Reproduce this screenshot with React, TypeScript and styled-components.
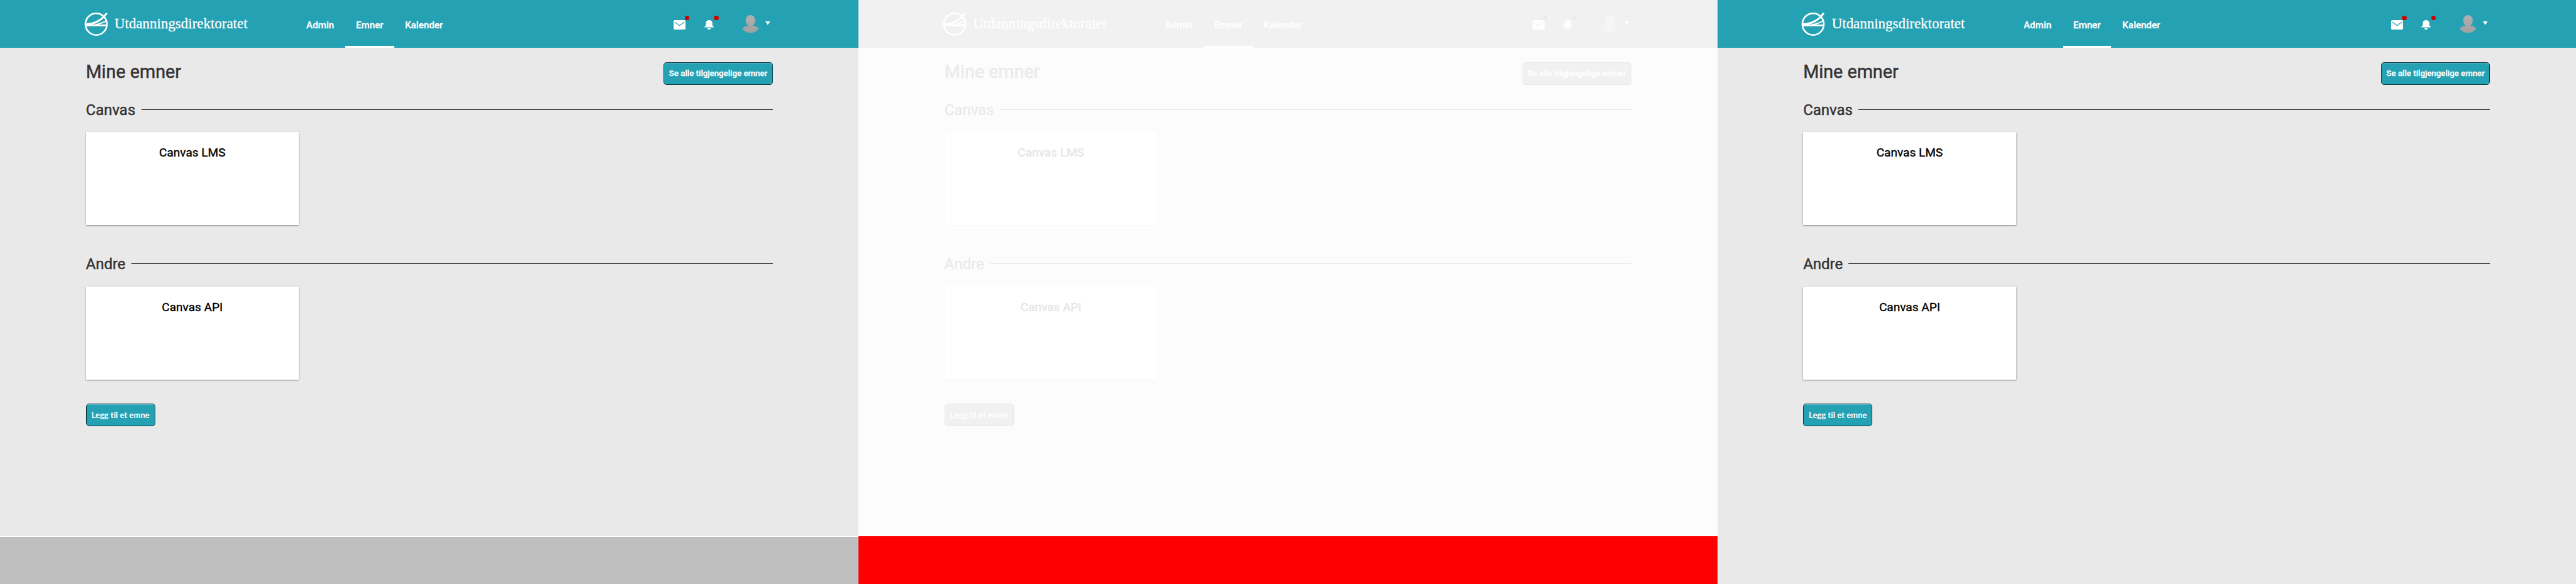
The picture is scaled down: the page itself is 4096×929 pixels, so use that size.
import React from 'react';
import styled, { createGlobalStyle, ThemeProvider } from 'styled-components';

const SCALE = 4096 / 4320;

const vivid = {
  page: '#e9e9e9', header: '#25a1b4', heading: '#333333', rule: '#000000', cardText: '#000000',
  buttonBorder: '#0d3b44', badge: '#cc0000', avatarTop: '#b0b0b0', avatarBottom: '#a0a0a0',
  shadow: '0 1px 3px rgba(0,0,0,.24), 0 1px 2px rgba(0,0,0,.3)', inset: 'rgba(255,255,255,.25)',
};
const faded = {
  page: '#fcfcfc', header: '#f1f1f1', heading: '#ebebeb', rule: '#e5e5e5', cardText: '#e5e5e5',
  buttonBorder: '#e8e8e8', badge: '#ebebeb', avatarTop: '#f6f6f6', avatarBottom: '#f5f5f5',
  shadow: '0 1px 2px rgba(0,0,0,.03)', inset: 'transparent',
};
type Palette = typeof vivid;

declare module 'styled-components' {
  export interface DefaultTheme extends Palette {}
}

const Global = createGlobalStyle`
  html, body { margin: 0; background: #fff; overflow: hidden; }
`;

const Board = styled.main`
  zoom: ${SCALE};
  display: flex;
  width: 4320px;
  height: 980px;
  font-family: Roboto, sans-serif;
`;

const Screen = styled.section`
  width: 1440px;
  height: 980px;
  display: flex;
  flex-direction: column;
  background: ${p => p.theme.page};
`;

const Header = styled.header`
  height: 80px;
  flex: none;
  box-sizing: border-box;
  padding: 0 144px 0 141px;
  display: flex;
  background: ${p => p.theme.header};
  color: #fff;
`;

const Brand = styled.a`
  display: flex;
  align-items: center;
  width: 354px;
  svg { flex: none; }
`;

const BrandName = styled.span`
  margin: 0 0 0 11px;
  font: 24.2px/30px 'Liberation Serif', serif;
  -webkit-text-stroke: 0.3px currentColor;
  white-space: nowrap;
`;

const Nav = styled.nav`
  display: flex;
`;

const NavItem = styled.a<{ $active?: boolean; $width: number }>`
  box-sizing: border-box;
  width: ${p => p.$width}px;
  height: 80px;
  padding-top: 5px;
  display: flex;
  align-items: center;
  justify-content: center;
  font-size: 16px;
  font-weight: 500;
  -webkit-text-stroke: 0.3px currentColor;
  border-top: 4px solid transparent;
  border-bottom: 4px solid ${p => (p.$active ? '#fff' : 'transparent')};
  white-space: nowrap;
`;

const Tools = styled.div`
  margin-left: auto;
  display: flex;
  align-items: flex-start;
`;

const Tool = styled.span<{ $left: number; $top: number }>`
  position: relative;
  display: flex;
  margin: ${p => p.$top}px 0 0 ${p => p.$left}px;
`;

const Badge = styled.i<{ $right: number }>`
  position: absolute;
  top: -8px;
  right: ${p => p.$right}px;
  width: 8px;
  height: 8px;
  border-radius: 50%;
  background: ${p => p.theme.badge};
`;

const Content = styled.div`
  flex: 1;
  padding: 24px 144px 0;
`;

const TitleRow = styled.div`
  height: 38px;
  display: flex;
  justify-content: space-between;
  align-items: center;
`;

const Title = styled.h1`
  margin: 0 0 6px;
  font-size: 30.3px;
  line-height: 38px;
  font-weight: 400;
  -webkit-text-stroke: 0.5px currentColor;
  color: ${p => p.theme.heading};
`;

const Button = styled.button<{ $width: number; $lato?: boolean }>`
  box-sizing: border-box;
  width: ${p => p.$width}px;
  height: 38px;
  padding: 0;
  border: 1px solid ${p => p.theme.buttonBorder};
  border-radius: 5px;
  background: ${p => p.theme.header};
  box-shadow: inset 0 1px 0 ${p => p.theme.inset};
  color: #fff;
  font: ${p => (p.$lato ? '700 13.8px/36px Lato' : '500 14px/36px Roboto')}, sans-serif;
  -webkit-text-stroke: ${p => (p.$lato ? 0 : 0.3)}px currentColor;
  white-space: nowrap;
`;

const Group = styled.section`
  height: 221px;
  padding-top: 24px;
  margin-bottom: 14px;
`;

const Actions = styled.div`
  display: flex;
  padding-top: 17px;
`;

const GroupHeading = styled.div`
  display: flex;
  align-items: center;
  height: 36px;
`;

const GroupName = styled.h2<{ $width: number }>`
  margin: 0;
  padding-top: 1px;
  width: ${p => p.$width}px;
  font-size: 25.3px;
  line-height: 36px;
  font-weight: 400;
  -webkit-text-stroke: 0.5px currentColor;
  color: ${p => p.theme.heading};
`;

const Rule = styled.div`
  flex: 1;
  border-top: 1px solid ${p => p.theme.rule};
`;

const Card = styled.article`
  box-sizing: border-box;
  width: 357px;
  height: 156px;
  margin-top: 20px;
  padding-top: 23px;
  background: #fff;
  box-shadow: ${p => p.theme.shadow};
  text-align: center;
  font-size: 20.1px;
  line-height: 24px;
  -webkit-text-stroke: 0.4px currentColor;
  color: ${p => p.theme.cardText};
`;

const Footer = styled.footer<{ $color: string; $line: string }>`
  box-sizing: border-box;
  height: 80px;
  flex: none;
  border-top: 1px solid ${p => p.$line};
  background: ${p => p.$color};
`;

function LogoMark() {
  return (
    <svg width="40" height="40" viewBox="0 0 40 40" fill="#fff">
      <ellipse cx="20" cy="20.500" rx="18" ry="18.200" fill="none" stroke="#fff" strokeWidth="2.700" />
      <path d="M2 21.200H38V24H2Z" />
      <path d="M2 19.300C17 18.300 28 13 36.300 1L39 2.600C33 12 24 18.500 12 21.400H2Z" />
      <path d="M12 21.600C22 20 31 17.500 37 13.700V16C32 18.800 27 20.500 21 21.600Z" />
    </svg>
  );
}

function Screenshot({ palette, footer, line }: { palette: Palette; footer?: string; line?: string }) {
  const id = palette === vivid ? 'avatar-vivid' : 'avatar-faded';
  return (
    <ThemeProvider theme={palette}>
      <Screen>
        <Header>
          <Brand><LogoMark /><BrandName>Utdanningsdirektoratet</BrandName></Brand>
          <Nav>
            <NavItem $width={84}>Admin</NavItem>
            <NavItem $width={82} $active>Emner</NavItem>
            <NavItem $width={100}>Kalender</NavItem>
          </Nav>
          <Tools>
            <Tool $left={0} $top={34}>
              <svg width="20" height="16" viewBox="0 0 20 16">
                <rect width="20" height="16" rx="2" fill="#fff" />
                <path d="M2 3.200L10 9.200L18 3.200" fill="none" stroke={palette.header} strokeWidth="1.200" />
              </svg>
              <Badge $right={-6} />
            </Tool>
            <Tool $left={31} $top={34}>
              <svg width="16" height="16" viewBox="0 0 16 16" fill="#fff">
                <path d="M8 0C4.500 0 2.500 2.500 2.500 5.500V8.500C2.500 10.200 0 10.500 0 12.200H16C16 10.500 13.500 10.200 13.500 8.500V5.500C13.500 2.500 11.500 0 8 0Z" />
                <path d="M5 13.500H11C10.500 15.200 9.500 16 8 16S5.500 15.200 5 13.500Z" />
              </svg>
              <Badge $right={-8} />
            </Tool>
            <Tool $left={48} $top={25}>
              <svg width="28" height="30" viewBox="0 0 28 30">
                <defs>
                  <linearGradient id={id} x1="0" y1="0" x2="0" y2="1">
                    <stop stopColor={palette.avatarTop} />
                    <stop offset="1" stopColor={palette.avatarBottom} />
                  </linearGradient>
                </defs>
                <path fill={`url(#${id})`} d="M14 0C9.300 0 6 4 6 9.200C6 13 8 16.500 10.500 18C6 18.200 2.500 19.500 .3 22.500C3.500 27.500 8.500 30 14 30S24.500 27.500 27.700 22.500C25.500 19.500 22 18.200 17.500 18C20 16.500 22 13 22 9.200C22 4 18.700 0 14 0Z" />
              </svg>
            </Tool>
            <Tool $left={11} $top={36}>
              <svg width="8" height="6" viewBox="0 0 8 6"><path d="M0 0H8L4 6Z" fill="#fff" /></svg>
            </Tool>
            <Tool $left={4} $top={0} />
          </Tools>
        </Header>
        <Content>
          <TitleRow>
            <Title>Mine emner</Title>
            <Button $width={183}>Se alle tilgjengelige emner</Button>
          </TitleRow>
          <Group>
            <GroupHeading><GroupName $width={93}>Canvas</GroupName><Rule /></GroupHeading>
            <Card>Canvas LMS</Card>
          </Group>
          <Group>
            <GroupHeading><GroupName $width={76}>Andre</GroupName><Rule /></GroupHeading>
            <Card>Canvas API</Card>
          </Group>
          <Actions>
            <Button $width={116} $lato>Legg til et emne</Button>
          </Actions>
        </Content>
        {footer && <Footer $color={footer} $line={line || footer} />}
      </Screen>
    </ThemeProvider>
  );
}

export default function App() {
  return (
    <>
      <Global />
      <Board>
        <Screenshot palette={vivid} footer="#bfbfbf" line="#ffffff" />
        <Screenshot palette={faded} footer="#ff0000" />
        <Screenshot palette={vivid} />
      </Board>
    </>
  );
}
